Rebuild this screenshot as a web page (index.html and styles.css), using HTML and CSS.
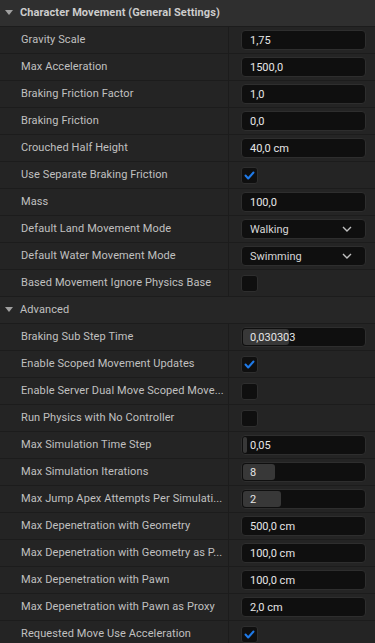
FILE: index.html
```html
<!DOCTYPE html>
<html lang="en">
<head>
  <meta charset="UTF-8" />
  <title>Details</title>
  <link rel="stylesheet" href="styles.css">
</head>
<body>
  <div class="details">
    <div class="category">
      <span class="arrow"></span>
      <span>Character Movement (General Settings)</span>
    </div>

    <div class="row"><div class="name">Gravity Scale</div><div class="value"><div class="field">1,75</div></div></div>
    <div class="row"><div class="name">Max Acceleration</div><div class="value"><div class="field">1500,0</div></div></div>
    <div class="row"><div class="name">Braking Friction Factor</div><div class="value"><div class="field">1,0</div></div></div>
    <div class="row"><div class="name">Braking Friction</div><div class="value"><div class="field">0,0</div></div></div>
    <div class="row"><div class="name">Crouched Half Height</div><div class="value"><div class="field">40,0 cm</div></div></div>
    <div class="row">
      <div class="name">Use Separate Braking Friction</div>
      <div class="value">
        <div class="check"><svg width="17" height="17" viewBox="0 0 17 17"><polyline points="4.5,8.5 7.2,11.5 12.5,5.5" /></svg></div>
      </div>
    </div>
    <div class="row"><div class="name">Mass</div><div class="value"><div class="field">100,0</div></div></div>
    <div class="row">
      <div class="name">Default Land Movement Mode</div>
      <div class="value">
        <div class="field combo"><span>Walking</span><svg width="10" height="6" viewBox="0 0 10 6"><polyline points="1,1 5,5 9,1" /></svg></div>
      </div>
    </div>
    <div class="row">
      <div class="name">Default Water Movement Mode</div>
      <div class="value">
        <div class="field combo"><span>Swimming</span><svg width="10" height="6" viewBox="0 0 10 6"><polyline points="1,1 5,5 9,1" /></svg></div>
      </div>
    </div>
    <div class="row"><div class="name">Based Movement Ignore Physics Base</div><div class="value"><div class="check"></div></div></div>

    <div class="category sub">
      <span class="arrow"></span>
      <span>Advanced</span>
    </div>

    <div class="row">
      <div class="name">Braking Sub Step Time</div>
      <div class="value"><div class="field slider"><div class="fill" style="width: 46px"></div><span>0,030303</span></div></div>
    </div>
    <div class="row">
      <div class="name">Enable Scoped Movement Updates</div>
      <div class="value">
        <div class="check"><svg width="17" height="17" viewBox="0 0 17 17"><polyline points="4.5,8.5 7.2,11.5 12.5,5.5" /></svg></div>
      </div>
    </div>
    <div class="row"><div class="name">Enable Server Dual Move Scoped Move...</div><div class="value"><div class="check"></div></div></div>
    <div class="row"><div class="name">Run Physics with No Controller</div><div class="value"><div class="check"></div></div></div>
    <div class="row">
      <div class="name">Max Simulation Time Step</div>
      <div class="value"><div class="field slider"><div class="fill" style="width: 4px"></div><span>0,05</span></div></div>
    </div>
    <div class="row">
      <div class="name">Max Simulation Iterations</div>
      <div class="value"><div class="field slider"><div class="fill" style="width: 32px"></div><span>8</span></div></div>
    </div>
    <div class="row">
      <div class="name">Max Jump Apex Attempts Per Simulati...</div>
      <div class="value"><div class="field slider"><div class="fill" style="width: 38px"></div><span>2</span></div></div>
    </div>
    <div class="row"><div class="name">Max Depenetration with Geometry</div><div class="value"><div class="field">500,0 cm</div></div></div>
    <div class="row"><div class="name">Max Depenetration with Geometry as P...</div><div class="value"><div class="field">100,0 cm</div></div></div>
    <div class="row"><div class="name">Max Depenetration with Pawn</div><div class="value"><div class="field">100,0 cm</div></div></div>
    <div class="row"><div class="name">Max Depenetration with Pawn as Proxy</div><div class="value"><div class="field">2,0 cm</div></div></div>
    <div class="row">
      <div class="name">Requested Move Use Acceleration</div>
      <div class="value">
        <div class="check"><svg width="17" height="17" viewBox="0 0 17 17"><polyline points="4.5,8.5 7.2,11.5 12.5,5.5" /></svg></div>
      </div>
    </div>
  </div>
</body>
</html>
```

FILE: styles.css
```css
* { box-sizing: border-box; }

body {
  margin: 0;
  padding: 0;
  background: #242424;
  font-family: Roboto, 'Liberation Sans', sans-serif;
  font-size: 11px;
  color: #c0c0c0;
  overflow: hidden;
}

.details {
  width: 375px;
  display: flex;
  flex-direction: column;
}

.category {
  height: 27px;
  display: flex;
  align-items: center;
  padding-left: 5px;
  padding-bottom: 1px;
  background: #2f2f2f;
  border-bottom: 1px solid #1c1c1c;
  font-weight: bold;
  letter-spacing: 0.1px;
  color: #cccccc;
}

.category.sub {
  background: #262626;
  font-weight: normal;
  color: #c0c0c0;
}

.arrow {
  width: 0;
  height: 0;
  margin-right: 7px;
  border-left: 4.5px solid transparent;
  border-right: 4.5px solid transparent;
  border-top: 5px solid #a0a0a0;
}

.row {
  height: 27px;
  display: grid;
  grid-template-columns: 229px 1fr;
  border-bottom: 1px solid #1c1c1c;
}

.name {
  padding: 0 2px 1px 21px;
  line-height: 26px;
  white-space: nowrap;
  border-right: 1px solid #1c1c1c;
  letter-spacing: 0.1px;
  overflow: hidden;
}

.value {
  padding: 0 9px 0 12px;
  display: flex;
  align-items: center;
}

.field {
  width: 125px;
  height: 20px;
  display: flex;
  align-items: center;
  padding-left: 8px;
  background: #0f0f0f;
  border: 1px solid #2e2e2e;
  border-radius: 4px;
  color: #e6e6e6;
  position: relative;
}

.combo {
  justify-content: space-between;
  padding-right: 13px;
  color: #d6d6d6;
}

.combo svg polyline {
  fill: none;
  stroke: #c0c0c0;
  stroke-width: 1.4;
}

.slider .fill {
  position: absolute;
  left: 1px;
  top: 1px;
  bottom: 1px;
  background: #383838;
  border-radius: 3px;
}

.slider span { position: relative; }

.check {
  width: 17px;
  height: 17px;
  background: #0f0f0f;
  border: 1px solid #2e2e2e;
  border-radius: 3px;
  display: flex;
  align-items: center;
  justify-content: center;
}

.check svg { display: block; margin: -1px; }

.check polyline {
  fill: none;
  stroke: #1f7ae8;
  stroke-width: 2;
  stroke-linecap: round;
  stroke-linejoin: round;
}
```
